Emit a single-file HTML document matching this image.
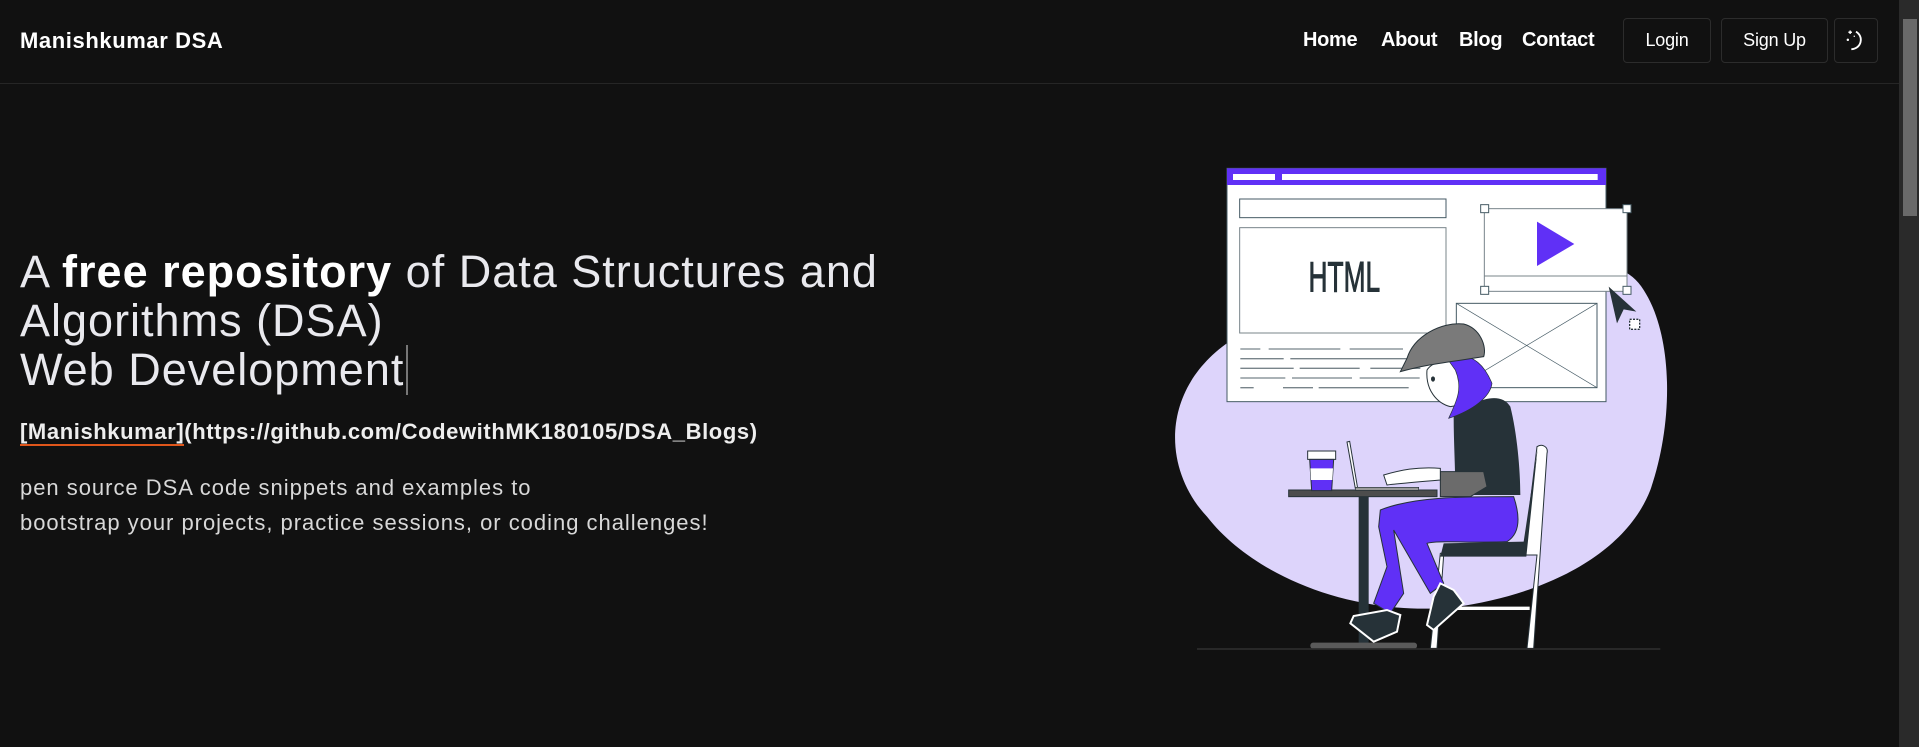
<!DOCTYPE html>
<html><head><meta charset="utf-8"><style>
*{margin:0;padding:0;box-sizing:border-box}
html,body{width:1919px;height:747px;overflow:hidden;background:#111111;font-family:"Liberation Sans",sans-serif;color:#fff}
.hdr{position:absolute;left:0;top:0;width:1899px;height:84px;border-bottom:1px solid #262626}
.logo{position:absolute;left:20px;top:28px;font-size:22px;font-weight:bold;letter-spacing:0.6px}
.nav{position:absolute;top:29px;font-size:20px;font-weight:bold;letter-spacing:-0.3px}
.btn{position:absolute;top:18px;height:45px;border:1px solid #2c2c2c;border-radius:4px;font-size:18px;display:flex;align-items:center;justify-content:center;letter-spacing:-0.2px}
.scroll{position:absolute;left:1899px;top:0;width:20px;height:747px;background:#2a2a2a}
.thumb{position:absolute;left:1903px;top:19px;width:14px;height:197px;background:#6a6a6a}
h1{position:absolute;left:20px;top:247px;font-size:45px;font-weight:300;line-height:49px;color:#e9e9ee;letter-spacing:1.0px;white-space:nowrap}
h1 b{font-weight:bold;color:#fff}
.cur{display:inline-block;width:2px;height:50px;background:#777;vertical-align:-10px;margin-left:2px}
.link{position:absolute;left:20px;top:419px;font-size:22px;font-weight:bold;color:#eee;letter-spacing:0.6px}
.link u{text-decoration:none;border-bottom:2px solid #e0561b}
.p{position:absolute;left:20px;font-size:22px;color:#d8d8d8;letter-spacing:0.98px}
</style></head><body>
<div class="hdr">
<div class="logo">Manishkumar DSA</div>
<div class="nav" style="left:1303px">Home</div>
<div class="nav" style="left:1381px">About</div>
<div class="nav" style="left:1459px">Blog</div>
<div class="nav" style="left:1522px">Contact</div>
<div class="btn" style="left:1623px;width:88px">Login</div>
<div class="btn" style="left:1721px;width:107px">Sign Up</div>
<div class="btn" style="left:1834px;width:44px">
<svg width="28" height="28" viewBox="0 0 24 24" fill="none" stroke="#fff" stroke-width="1.6"><path d="M12 4a8 8 0 0 1-4 15 8 8 0 0 0 4-15z"/><path d="M7 3v3M5.5 4.5h3M5 10v2M4 11h2M10 8h1" stroke-width="1.2"/></svg></div>
</div>
<div class="scroll"></div><div class="thumb"></div>
<h1>A <b>free repository</b> of Data Structures and<br>Algorithms (DSA)<br>Web Development<span class="cur"></span></h1>
<div class="link"><u>[Manishkumar]</u>(https://github.com/CodewithMK180105/DSA_Blogs)</div>
<div class="p" style="top:475px">pen source DSA code snippets and examples to</div>
<div class="p" style="top:510px">bootstrap your projects, practice sessions, or coding challenges!</div>

<svg style="position:absolute;left:1150px;top:150px" width="530" height="510" viewBox="0 0 1568 1530">
<path d="M250 560 C420 470 800 430 1000 380 C1200 330 1400 300 1470 420 C1560 560 1560 820 1490 1020 C1420 1200 1200 1330 900 1372 C600 1400 300 1280 160 1100 C20 950 20 700 250 560Z" fill="#ddd4fb"/>
<rect x="220" y="55" width="1137" height="700" fill="#fff" stroke="#455a64" stroke-width="3"/>
<rect x="220" y="55" width="1137" height="50" fill="#6030f6"/>
<rect x="238" y="72" width="126" height="18" fill="#fff"/><rect x="385" y="72" width="947" height="18" fill="#fff"/>
<rect x="258" y="147" width="619" height="56" fill="none" stroke="#455a64" stroke-width="3"/>
<rect x="258" y="233" width="619" height="316" fill="none" stroke="#78848a" stroke-width="3"/>
<text x="572" y="424" font-family="Liberation Sans,sans-serif" font-size="128" fill="#263238" stroke="#263238" stroke-width="3" text-anchor="middle" textLength="215" lengthAdjust="spacingAndGlyphs">HTML</text>
<g stroke="#78848a" stroke-width="4">
<path d="M260 597h60M345 597h215M588 597h160M260 626h130M410 626h360M260 655h160M438 655h180M650 655h150M260 684h135M415 684h180M618 684h180M260 713h40M388 713h90M495 713h270"/></g>
<rect x="908" y="460" width="422" height="253" fill="#fff" stroke="#455a64" stroke-width="3"/>
<path d="M908 460L1330 713M1330 460L908 713" stroke="#455a64" stroke-width="2"/>
<rect x="992" y="176" width="428" height="248" fill="#fff" stroke="#78848a" stroke-width="3"/>
<path d="M992 378H1420" stroke="#78848a" stroke-width="3"/>
<path d="M1150 215L1262 282L1150 348Z" fill="#6030f6"/>
<g fill="#fff" stroke="#455a64" stroke-width="3"><rect x="981" y="164" width="24" height="24"/><rect x="1408" y="164" width="24" height="24"/><rect x="981" y="409" width="24" height="24"/><rect x="1408" y="409" width="24" height="24"/></g>
<path d="M1365 410L1448 485L1410 478L1390 520Z" fill="#263238"/>
<rect x="1428" y="508" width="30" height="30" fill="#fff" stroke="#263238" stroke-width="4" stroke-dasharray="6 4"/>
<path d="M1150 890C1165 880 1185 890 1180 910L1140 1495H1120L1150 1215H870L850 1495H830L860 1210 1115 1180Z" fill="#fff" stroke="#263238" stroke-width="3"/>
<path d="M1152 895L1118 1220H860L870 1180 1110 1175Z" fill="#263238"/>
<path d="M850 1375H1128" stroke="#fff" stroke-width="10"/>
<rect x="405" y="1020" width="445" height="20" fill="#4d4d4d" stroke="#263238" stroke-width="3"/>
<rect x="615" y="1040" width="30" height="440" fill="#263238"/>
<rect x="470" y="1478" width="320" height="18" rx="8" fill="#5a5a5a"/>
<path d="M462 903H546V928H462Z" fill="#fff" stroke="#263238" stroke-width="3"/>
<path d="M468 928H540L534 1022H474Z" fill="#6030f6" stroke="#263238" stroke-width="3"/>
<path d="M470 955H538L536 990H472Z" fill="#fff"/>
<path d="M580 876L588 874L612 1015H605Z" fill="#fff" stroke="#263238" stroke-width="3"/>
<rect x="605" y="1012" width="190" height="9" fill="#999" stroke="#263238" stroke-width="2"/>
<path d="M680 1080C780 1040 920 1040 1080 1040 1100 1100 1100 1150 1060 1175 960 1180 850 1170 820 1180L870 1300 830 1330 720 1140 750 1330 710 1390 660 1360 700 1250 675 1130Z" fill="#6030f6" stroke="#263238" stroke-width="3"/>
<path d="M700 1380L740 1395 730 1445 660 1475 590 1420 600 1398Z" fill="#263238" stroke="#fff" stroke-width="6"/>
<path d="M860 1300L900 1320 930 1360 840 1440 820 1425 840 1340Z" fill="#263238" stroke="#fff" stroke-width="6"/>
<path d="M900 800C960 750 1040 720 1070 770 1090 850 1100 960 1100 1035H905C905 950 900 880 900 800Z" fill="#263238"/>
<path d="M860 965H990L1000 1010 950 1040H860Z" fill="#6b6b6b" stroke="#263238" stroke-width="3"/>
<path d="M690 975C740 960 790 950 860 955V990C800 995 740 1000 700 1005Z" fill="#fff" stroke="#263238" stroke-width="3"/>
<path d="M820 660C840 630 900 620 960 640 990 700 960 760 890 770 850 760 815 720 820 660Z" fill="#fff" stroke="#263238" stroke-width="3"/>
<path d="M880 625C950 600 990 640 1015 700 1010 740 960 780 885 805 905 760 930 720 905 660Z" fill="#6030f6" stroke="#263238" stroke-width="2"/>
<ellipse cx="838" cy="687" rx="6" ry="8" fill="#263238"/>
<path d="M760 625C780 560 860 515 930 522 980 535 1000 590 990 620 900 635 830 640 740 665Z" fill="#7a7a7a" stroke="#263238" stroke-width="3"/>
<path d="M130 1497H1520" stroke="#2c2c2c" stroke-width="5"/>
</svg>
</body></html>
